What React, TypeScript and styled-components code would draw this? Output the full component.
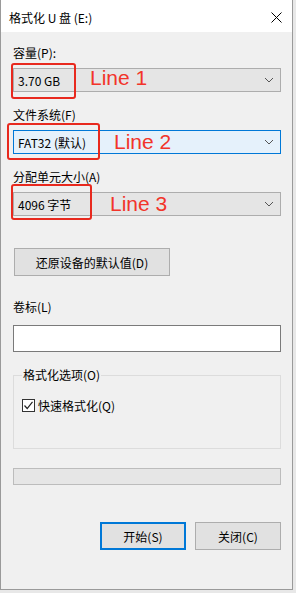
import styled, { createGlobalStyle } from 'styled-components';

const GlobalStyle = createGlobalStyle`
  html, body {
    margin: 0;
    padding: 0;
    background: #e8e8e8;
  }
  * {
    box-sizing: border-box;
  }
  body {
    font-family: "Noto Sans CJK SC", "Liberation Sans", sans-serif;
    font-size: 12px;
    color: #000;
  }
`;

const Window = styled.div`
  width: 293px;
  height: 590px;
  border: 1px solid #9a9a9a;
  border-top: none;
  background: #f0f0f0;
  display: flex;
  flex-direction: column;
`;

const TitleBar = styled.div`
  height: 32px;
  background: #ffffff;
  display: flex;
  align-items: center;
  justify-content: space-between;
  padding: 2px 10px 0 8px;
  font-size: 12px;
`;

const Body = styled.div`
  display: flex;
  flex-direction: column;
  padding: 0 11px 0 12px;
`;

const Label = styled.div<{ $top: number }>`
  margin-top: ${(p) => p.$top}px;
  line-height: 16px;
  height: 16px;
  white-space: nowrap;
`;

const Combo = styled.div<{ $focused?: boolean }>`
  position: relative;
  margin-top: 7px;
  height: 24px;
  display: flex;
  align-items: center;
  justify-content: space-between;
  padding: 0 6px 0 4px;
  border: 1px solid ${(p) => (p.$focused ? '#0078d7' : '#adadad')};
  background: ${(p) => (p.$focused ? '#e5f1fb' : '#e5e5e5')};
  white-space: nowrap;
`;

const RedBox = styled.div<{ $left: number; $top: number; $w: number; $h: number }>`
  position: absolute;
  left: ${(p) => p.$left}px;
  top: ${(p) => p.$top}px;
  width: ${(p) => p.$w}px;
  height: ${(p) => p.$h}px;
  border: 2px solid #e8291e;
  border-radius: 3px;
  pointer-events: none;
`;

const Note = styled.span<{ $left: number; $top: number }>`
  position: absolute;
  left: ${(p) => p.$left}px;
  top: ${(p) => p.$top}px;
  font-family: "Liberation Sans", sans-serif;
  font-size: 21px;
  line-height: 24px;
  color: #f2342a;
`;

const Button = styled.button<{ $width: number; $primary?: boolean }>`
  width: ${(p) => p.$width}px;
  height: 28px;
  padding: 0;
  font-family: inherit;
  font-size: 12px;
  color: #000;
  background: #e1e1e1;
  border: ${(p) => (p.$primary ? '2px solid #0078d7' : '1px solid #adadad')};
  border-radius: 0;
`;

const TextBox = styled.div`
  margin-top: 10px;
  height: 27px;
  background: #ffffff;
  border: 1px solid #7a7a7a;
`;

const Group = styled.fieldset`
  margin: 15px 0 0 0;
  height: 82px;
  padding: 0 8px;
  border: 1px solid #dcdcdc;
  min-width: 0;

  legend {
    padding: 0 1px;
    line-height: 16px;
    font-size: 12px;
  }
`;

const CheckRow = styled.label`
  margin-top: 14px;
  display: flex;
  align-items: center;
  gap: 3px;
  height: 16px;
`;

const CheckBox = styled.span`
  width: 13px;
  height: 13px;
  border: 1px solid #333333;
  background: #ffffff;
  display: flex;
  align-items: center;
  justify-content: center;
`;

const Progress = styled.div`
  margin-top: 19px;
  height: 17px;
  background: #e6e6e6;
  border: 1px solid #bcbcbc;
`;

const Footer = styled.div`
  margin-top: 37px;
  display: flex;
  justify-content: flex-end;
  gap: 9px;
`;

const Chevron = () => (
  <svg width="10" height="6" viewBox="0 0 10 6">
    <polyline points="1,1 5,5 9,1" fill="none" stroke="#555" strokeWidth="1" />
  </svg>
);

const CloseIcon = () => (
  <svg width="11" height="11" viewBox="0 0 11 11">
    <path d="M0.5 0.5 L10.5 10.5 M10.5 0.5 L0.5 10.5" stroke="#000" strokeWidth="1" />
  </svg>
);

const App = () => {
  return (
    <>
      <GlobalStyle />
      <Window>
        <TitleBar>
          <span>格式化 U 盘 (E:)</span>
          <CloseIcon />
        </TitleBar>
        <Body>
          <Label $top={13}>容量(P):</Label>
          <Combo>
            <span>3.70 GB</span>
            <Chevron />
            <RedBox $left={-3} $top={-6} $w={65} $h={36} />
            <Note $left={76} $top={-3}>Line 1</Note>
          </Combo>

          <Label $top={15}>文件系统(F)</Label>
          <Combo $focused>
            <span>FAT32 (默认)</span>
            <Chevron />
            <RedBox $left={-7} $top={-8} $w={93} $h={37} />
            <Note $left={100} $top={-1}>Line 2</Note>
          </Combo>

          <Label $top={15}>分配单元大小(A)</Label>
          <Combo>
            <span>4096 字节</span>
            <Chevron />
            <RedBox $left={-3} $top={-9} $w={81} $h={36} />
            <Note $left={96} $top={-1}>Line 3</Note>
          </Combo>

          <div style={{ marginTop: 32, marginLeft: 1 }}>
            <Button $width={156}>还原设备的默认值(D)</Button>
          </div>

          <Label $top={23}>卷标(L)</Label>
          <TextBox />

          <Group>
            <legend>格式化选项(O)</legend>
            <CheckRow>
              <CheckBox>
                <svg width="11" height="11" viewBox="0 0 11 11">
                  <polyline points="1.5,5.5 4.2,8.5 9.5,1.8" fill="none" stroke="#222" strokeWidth="1.2" />
                </svg>
              </CheckBox>
              <span>快速格式化(Q)</span>
            </CheckRow>
          </Group>

          <Progress />

          <Footer>
            <Button $width={86} $primary>开始(S)</Button>
            <Button $width={86}>关闭(C)</Button>
          </Footer>
        </Body>
      </Window>
    </>
  );
};

export default App;
